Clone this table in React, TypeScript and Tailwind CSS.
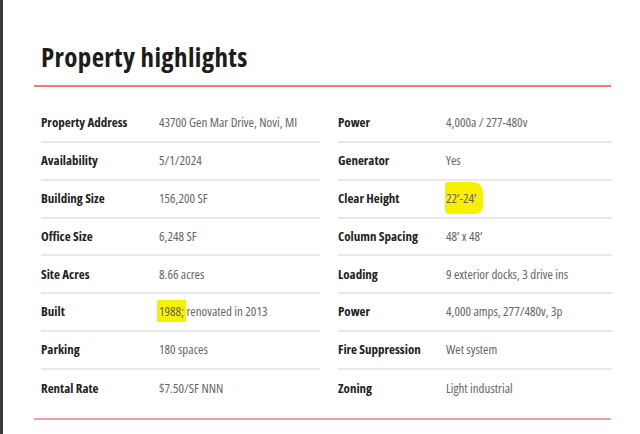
const left = [
  ['Property Address', '43700 Gen Mar Drive, Novi, MI'],
  ['Availability', '5/1/2024'],
  ['Building Size', '156,200 SF'],
  ['Office Size', '6,248 SF'],
  ['Site Acres', '8.66 acres'],
  ['Built', 'built'],
  ['Parking', '180 spaces'],
  ['Rental Rate', '$7.50/SF NNN'],
]

const right = [
  ['Power', '4,000a / 277-480v'],
  ['Generator', 'Yes'],
  ['Clear Height', 'clear'],
  ['Column Spacing', '48\u2019 x 48\u2019'],
  ['Loading', '9 exterior docks, 3 drive ins'],
  ['Power', '4,000 amps, 277/480v, 3p'],
  ['Fire Suppression', 'Wet system'],
  ['Zoning', 'Light industrial'],
]

function Value({ v }: { v: string }) {
  if (v === 'built')
    return (
      <span>
        <span className="bg-[#f7f000] px-[2px] -mx-[2px] py-[2px]">1988;</span> renovated in 2013
      </span>
    )
  if (v === 'clear')
    return (
      <span className="relative">
        <span className="absolute -left-[1px] -right-[7px] -top-[7px] -bottom-[7px] bg-[#f7f000] rounded-[3px_10px_8px_4px]" />
        <span className="relative">22’-24’</span>
      </span>
    )
  return <span>{v}</span>
}

function Column({ rows, labelW }: { rows: string[][]; labelW: string }) {
  return (
    <div className="flex flex-col">
      {rows.map(([k, v], i) => (
        <div
          key={i}
          className={`flex items-center h-[37.85px] whitespace-nowrap ${i < rows.length - 1 ? 'border-b-2 border-[#e8e8e8]' : ''}`}
        >
          <div className={`${labelW} shrink-0 font-bold text-[#222]`}>{k}</div>
          <div className="text-[#666]">
            <Value v={v} />
          </div>
        </div>
      ))}
    </div>
  )
}

export default function App() {
  return (
    <div className="w-[640px] h-[434px] bg-white border-l-[3px] border-[#3c3c3c] overflow-hidden text-[13px] font-['Open_Sans',sans-serif] font-stretch-[80%]">
      <div className="pl-[31px] w-[608px] pt-[39px]">
        <h1 className="pl-[7px] text-[27px] leading-[36px] font-bold tracking-[0.35px] text-[#1c1c1c]">Property highlights</h1>
        <div className="mt-[10px] h-[2px] bg-[#f27b7b]" />
        <div className="pl-[7px] pt-[18px] grid grid-cols-[279px_274px] gap-x-[18px]">
          <Column rows={left} labelW="w-[118px]" />
          <Column rows={right} labelW="w-[108px]" />
        </div>
        <div className="mt-[10px] h-[2px] bg-[#f49ea2]" />
      </div>
    </div>
  )
}
